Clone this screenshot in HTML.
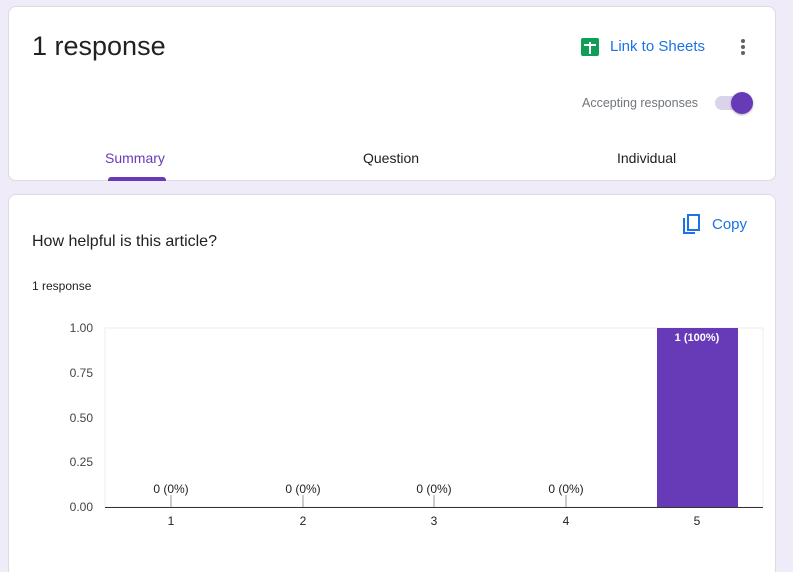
<!DOCTYPE html>
<html><head><meta charset="utf-8"><style>
*{box-sizing:border-box;margin:0;padding:0}
html,body{width:793px;height:572px;overflow:hidden}
body{background:#efebf8;font-family:"Liberation Sans",Arial,sans-serif;position:relative}
.card{position:absolute;left:8px;width:768px;background:#fff;border:1px solid #dadce0;border-radius:8px}
.t{position:absolute;white-space:nowrap}
</style></head><body>
<div class="card" style="top:6px;height:175px">
  <div class="t" style="left:23px;top:24px;font-size:27px;color:#202124">1 response</div>
  <div class="t" style="left:572px;top:31px;width:18px;height:18px;background:#0f9d58;border-radius:2px">
    <div style="position:absolute;left:8px;top:4px;width:2px;height:12px;background:#fff"></div>
    <div style="position:absolute;left:3px;top:6px;width:12px;height:2px;background:#fff"></div>
  </div>
  <div class="t" style="left:601px;top:31px;font-size:15px;color:#1a73e8">Link to Sheets</div>
  <div class="t" style="left:732px;top:32px">
    <div style="width:4px;height:4px;border-radius:2px;background:#5f6368;margin-bottom:2px"></div>
    <div style="width:4px;height:4px;border-radius:2px;background:#5f6368;margin-bottom:2px"></div>
    <div style="width:4px;height:4px;border-radius:2px;background:#5f6368"></div>
  </div>
  <div class="t" style="left:573px;top:89px;font-size:12.5px;color:#70757a">Accepting responses</div>
  <div class="t" style="left:706px;top:89px;width:34px;height:14px;border-radius:7px;background:#d9d3ec"></div>
  <div class="t" style="left:722px;top:85px;width:22px;height:22px;border-radius:11px;background:#673ab7;box-shadow:0 1px 2px rgba(0,0,0,.3)"></div>
  <div class="t" style="left:96px;top:143px;font-size:14px;color:#673ab7">Summary</div>
  <div class="t" style="left:99px;top:170px;width:58px;height:4px;background:#673ab7;border-radius:3px 3px 0 0"></div>
  <div class="t" style="left:354px;top:143px;font-size:14px;color:#202124">Question</div>
  <div class="t" style="left:608px;top:143px;font-size:14px;color:#202124">Individual</div>
</div>
<div class="card" style="top:194px;height:390px">
  <svg class="t" style="left:673px;top:19px" width="20" height="22" viewBox="0 0 20 22"><path d="M2 4v15h11" fill="none" stroke="#1a73e8" stroke-width="2"/><rect x="6" y="1" width="11" height="15" fill="none" stroke="#1a73e8" stroke-width="2"/></svg>
  <div class="t" style="left:703px;top:21px;font-size:15px;color:#1a73e8">Copy</div>
  <div class="t" style="left:23px;top:38px;font-size:16px;color:#202124">How helpful is this article?</div>
  <div class="t" style="left:23px;top:84px;font-size:12px;color:#202124">1 response</div>
</div>
<svg class="t" style="left:0;top:0" width="793" height="572" font-family="Liberation Sans,Arial,sans-serif" font-size="12">
  <rect x="105" y="328" width="658" height="179" fill="none" stroke="#eeeeee"/>
  <g fill="#444" text-anchor="end">
    <text x="93" y="332">1.00</text><text x="93" y="377">0.75</text><text x="93" y="422">0.50</text><text x="93" y="466">0.25</text><text x="93" y="511">0.00</text>
  </g>
  <rect x="657" y="328" width="81" height="179" fill="#673ab7"/>
  <text x="697" y="341" fill="#fff" text-anchor="middle" font-weight="bold" font-size="11">1 (100%)</text>
  <g stroke="#999"><line x1="171" y1="495" x2="171" y2="507"/><line x1="303" y1="495" x2="303" y2="507"/><line x1="434" y1="495" x2="434" y2="507"/><line x1="566" y1="495" x2="566" y2="507"/></g>
  <g fill="#222" text-anchor="middle">
    <text x="171" y="493">0 (0%)</text><text x="303" y="493">0 (0%)</text><text x="434" y="493">0 (0%)</text><text x="566" y="493">0 (0%)</text>
    <text x="171" y="525">1</text><text x="303" y="525">2</text><text x="434" y="525">3</text><text x="566" y="525">4</text><text x="697" y="525">5</text>
  </g>
  <line x1="105" y1="507.5" x2="763" y2="507.5" stroke="#333"/>
</svg>
</body></html>
